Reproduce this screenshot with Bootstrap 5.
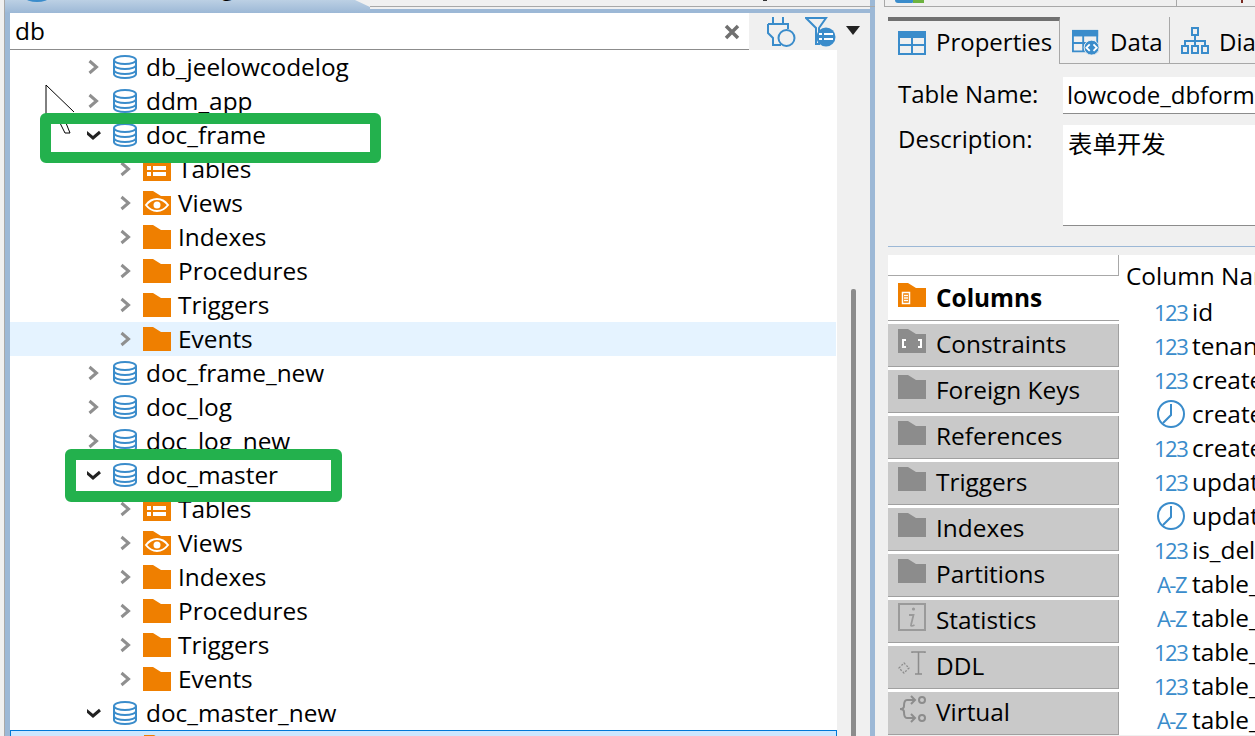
<!DOCTYPE html>
<html lang="en">

<head>
    <meta charset="UTF-8">
    <title>Database Navigator</title>
    <link href="https://cdn.jsdelivr.net/npm/bootstrap@5.3.0/dist/css/bootstrap.min.css" rel="stylesheet">
    <style>
        html, body { height: 100%; }

        body {
            background-color: #f0f0f0;
            color: #000;
            font-family: "Open Sans", "Noto Sans CJK SC", sans-serif;
            font-size: 24.4px;
            overflow: hidden;
        }

        .app { width: 1255px; height: 736px; overflow: hidden; position: relative; }

        /* Left pane */
        .gutter { width: 5px; border-right: 1px solid #a8a8a8; flex: none; }
        .nav-pane { width: 870px; flex: none; border-left: 5px solid #9cb8d6; border-right: 5px solid #9cb8d6; }
        .pane-head { height: 13px; flex: none; margin-left: -5px; margin-right: -5px; overflow: hidden; }
        .pane-tab {
            width: 365px; flex: none; height: 13px; overflow: hidden; padding-left: 20px;
            background: linear-gradient(#bcd0e4, #9cb8d6);
            clip-path: polygon(0 0, 350px 0, 365px 7px, 365px 13px, 0 13px);
        }
        .pane-tab-inner { margin-top: -30px; line-height: 32px; white-space: nowrap; }
        .pane-tab-inner .ico-db { margin-right: 8px; margin-top: 8px; }
        .pane-rest { flex-grow: 1; }
        .pane-rest-top { height: 7px; border-bottom: 1px solid #a8a8a8; padding-left: 393px; }
        .pane-rest-top span { display: block; width: 4px; height: 1px; background: #333; }
        .pane-rest-blue { height: 4px; background: #9cb8d6; margin-top: 2px; }
        .search-bar { flex: none; height: 37px; }
        .search-field {
            width: 739px; height: 37px; flex: none; background: #fff; border-bottom: 1px solid #8c8c8c;
            padding: 1px 5px 0;
        }
        .search-text { flex-grow: 1; }
        .ico-close { width: 16px; height: 16px; margin-right: 4px; }
        .tool-plug { width: 29px; height: 31px; margin-left: 18px; }
        .tool-filter { width: 31px; height: 31px; margin-left: 9px; }
        .tool-caret { width: 14px; height: 9px; margin-left: 10px; margin-top: -3px; }

        .tree-scroll { width: 33px; flex: none; padding: 239px 0 0 14px; }
        .scroll-thumb { width: 5px; height: 460px; background: #8c8c8c; border-radius: 2px 2px 0 0; }
        .tree { width: 827px; flex: none; background: #fff; height: 686px; overflow: hidden; }
        .tree-row { height: 34px; white-space: nowrap; }
        .tree-row.hover { background: #e5f3ff; margin-right: 1px; }
        .tree-row.selected { background: #cce8ff; border: 1px solid #0078d7; }
        .lv0 { padding-left: 77px; }
        .lv1 { padding-left: 109px; }
        .chev { width: 14px; height: 16px; flex: none; margin-right: 12px; }
        .lv1 .chev { margin-right: 10px; }
        .ico-db { width: 24px; height: 24px; flex: none; margin-right: 9px; }
        .ico-folder { width: 28px; height: 24px; flex: none; margin-right: 7px; }

        /* annotations drawn on top of the screenshot */
        .mark-box { position: absolute; border: 11px solid #23b14d; border-radius: 6px; }
        .mark-a { left: 40px; top: 113px; width: 341px; height: 50px; }
        .mark-b { left: 65px; top: 449px; width: 277px; height: 53px; }
        .cursor-trace { position: absolute; left: 44px; top: 83px; width: 32px; height: 54px; }

        /* Right pane */
        .detail { flex-grow: 1; min-width: 0; overflow: hidden; }
        .top-strip { height: 7px; margin-left: 9px; border-left: 1px solid #a8a8a8; border-bottom: 1px solid #a8a8a8; overflow: hidden; }
        .top-strip-a { width: 292px; border-right: 1px solid #a8a8a8; padding-left: 10px; }
        .top-strip-b { padding-left: 64px; }
        .top-strip-b span { display: block; width: 2px; height: 3px; background: #7a2a20; }
        .strip-icon { width: 30px; height: 4px; display: block; }
        .tabs-bar { height: 47px; margin-top: 10px; margin-left: 13px; font-size: 24px; }
        .prop-tab { white-space: nowrap; padding-left: 10px; height: 47px; flex: none; border-bottom: 1px solid #a8a8a8; padding-top: 4px; }
        .prop-tab.active { width: 172px; border-bottom: 0; border-right: 1px solid #a8a8a8; border-top: 4px solid #707070; padding-top: 0; padding-bottom: 2px; }
        .prop-tab.second { width: 110px; border-right: 1px solid #a8a8a8; padding-left: 12px; }
        .prop-tab.third { flex: 1 0 auto; padding-left: 11px; }
        .tab-ico { width: 28px; height: 24px; flex: none; margin-right: 10px; }
        .tab-ico.tall { height: 27px; }
        .prop-tab.active .tab-ico { margin-top: 2px; }
        .prop-tab.third .tab-ico { margin-bottom: 4px; }

        .prop-form { padding-top: 13px; height: 183px; border-bottom: 1px solid #9cb8d6; margin-left: 13px; font-size: 24px; }
        .prop-form-row { padding-left: 10px; }
        .prop-label { width: 165px; flex: none; line-height: 34px; }
        .prop-label.raised { margin-top: -3px; }
        .prop-value.form-control {
            border: 0; border-bottom: 1px solid #8c8c8c; border-radius: 0; background: #fff; color: #000;
            font-size: inherit; padding: 0 4px; white-space: nowrap; overflow: hidden; flex-grow: 1;
        }
        .v-name { height: 37px; line-height: 36px; margin-bottom: 11px; }
        .prop-value.v-desc { height: 101px; padding: 0 5px !important; line-height: 36px; font-size: 24.4px; }
        .cjk-text { font-family: "Noto Sans CJK SC", sans-serif; }

        .lower { margin-left: 13px; margin-top: 8px; background: #fff; height: 480px; }
        .side-tabs { width: 231px; flex: none; }
        .side-blank { height: 21px; border-right: 1px solid #a8a8a8; border-bottom: 1px solid #a8a8a8; margin-bottom: 2px; }
        .side-item { height: 43px; margin-bottom: 3px; padding: 0 0 2px 10px; background: #c9c9c9; border-bottom: 1px solid #a0a0a0; border-right: 1px solid #a0a0a0; white-space: nowrap; }
        .side-item.active { background: #fff; font-weight: 700; border-right: 0; }
        .side-ico { width: 28px; height: 24px; flex: none; margin-right: 10px; margin-bottom: 6px; }
        .side-ico.big { height: 28px; }

        .col-list { flex-grow: 1; min-width: 0; padding-top: 4px; overflow: hidden; }
        .col-head { height: 36px; line-height: 34px; padding-left: 7px; white-space: nowrap; }
        .col-row { height: 34px; padding-left: 35px; white-space: nowrap; }
        .col-type { width: 32px; flex: none; margin-right: 6px; color: #3a8ccb; text-align: right; letter-spacing: -1.5px; font-size: 22px; }
        .col-clock { width: 30px; height: 30px; flex: none; margin: 0 6px 0 2px; }
    </style>
</head>

<body>
    <svg width="0" height="0" class="position-absolute">
        <defs>
            <symbol id="db" viewBox="0 0 24 24">
                <g fill="none" stroke="#3a8ccb" stroke-width="2">
                    <ellipse cx="12" cy="5" rx="11" ry="4" />
                    <path d="M1 5v14c0 2.2 4.9 4 11 4s11-1.8 11-4V5" />
                    <path d="M1 10c0 2.2 4.9 4 11 4s11-1.8 11-4M1 15c0 2.200 4.900 4 11 4s11-1.800 11-4" />
                </g>
            </symbol>
            <symbol id="chev-r" viewBox="0 0 14 16">
                <path d="M2.500 2l7 6-7 6" fill="none" stroke="#8f8f8f" stroke-width="3" />
            </symbol>
            <symbol id="chev-d" viewBox="0 0 14 16">
                <path d="M-1 5l7 6 7-6" fill="none" stroke="#222" stroke-width="3" />
            </symbol>
            <symbol id="folder" viewBox="0 0 28 24">
                <path d="M0 0h10l8 5h10v19H0z" />
            </symbol>
            <symbol id="f-tables" viewBox="0 0 28 24">
                <path d="M0 0h10l8 5h10v19H0z" fill="#ef7f00" />
                <path d="M4 9h4v4H4zM10 9h13v4H10zM4 15h4v4H4zM10 15h13v4H10z" fill="#fff" />
            </symbol>
            <symbol id="f-views" viewBox="0 0 28 24">
                <path d="M0 0h10l8 5h10v19H0z" fill="#ef7f00" />
                <path d="M3 14c6-8 16-8 22 0-6 8-16 8-22 0z" fill="none" stroke="#fff" stroke-width="2" />
                <circle cx="14" cy="14" r="3.500" fill="#fff" />
            </symbol>
            <symbol id="f-columns" viewBox="0 0 28 24">
                <path d="M0 0h10l8 5h10v19H0z" fill="#ef7f00" />
                <path d="M3 7h10v15H3z" fill="#ef7f00" />
                <path d="M4.500 9.500h7v11h-7z" fill="none" stroke="#fff" stroke-width="1.500" />
                <path d="M6 12.500h4M6 15h4M6 17.500h4" stroke="#fff" stroke-width="1.500" />
            </symbol>
            <symbol id="f-constraints" viewBox="0 0 28 24">
                <path d="M0 0h10l8 5h10v19H0z" fill="#8c8c8c" />
                <path d="M8 11H5v7h3M20 11h3v7h-3" fill="none" stroke="#fff" stroke-width="2" />
            </symbol>
            <symbol id="i-stats" viewBox="0 0 28 28">
                <path d="M1 1h26v26H1z" fill="none" stroke="#9a9a9a" stroke-width="2" />
                <circle cx="15.500" cy="6" r="1.600" fill="#9a9a9a" />
                <path d="M11 12h4.500l-2.500 10c-.3 1 .5 1.500 3.500 0" fill="none" stroke="#9a9a9a" stroke-width="1.800" />
            </symbol>
            <symbol id="i-ddl" viewBox="0 0 28 24">
                <path d="M14 2V1h13v1M20.500 1v22M17 23h7" fill="none" stroke="#8c8c8c" stroke-width="1.500" />
                <path d="M1 17l5-5 5 5-5 5z" fill="none" stroke="#8c8c8c" stroke-width="1.300" stroke-dasharray="2 1.500" />
            </symbol>
            <symbol id="i-virtual" viewBox="0 0 28 28">
                <g fill="none" stroke="#8c8c8c" stroke-width="2">
                    <path d="M16 5H9C6 5 6 8 6 11c0 2-1 3-4 3 3 0 4 1 4 3 0 3 0 6 3 6h7" />
                    <path d="M13 1l4 4-4 4M13 19l4 4-4 4" />
                    <circle cx="24" cy="5" r="3" />
                    <circle cx="24" cy="23" r="3" />
                </g>
            </symbol>
            <symbol id="i-clock" viewBox="0 0 30 30">
                <circle cx="15" cy="15" r="13" fill="none" stroke="#3a8ccb" stroke-width="2" />
                <path d="M15 5v11L7 24" fill="none" stroke="#3a8ccb" stroke-width="2" />
            </symbol>
            <symbol id="t-table" viewBox="0 0 28 24">
                <path d="M0 0h28v7H0z" fill="#3a8ccb" />
                <path d="M1 1h26v22H1zM1 14h26M14 6v17" fill="none" stroke="#3a8ccb" stroke-width="2" />
            </symbol>
            <symbol id="t-data" viewBox="0 0 30 27">
                <path d="M0 0h28v7H0z" fill="#3a8ccb" />
                <path d="M1 1h26v22H1zM1 14h14M12 6v17" fill="none" stroke="#3a8ccb" stroke-width="2" />
                <circle cx="21" cy="19" r="8" fill="#3a8ccb" stroke="#f0f0f0" stroke-width="1" />
                <path d="M19 15.500L15.500 19l3.500 3.500M23 15.500l3.500 3.500-3.500 3.500" fill="none" stroke="#fff" stroke-width="2" />
            </symbol>
            <symbol id="t-diagram" viewBox="0 0 28 27">
                <g fill="none" stroke="#3a8ccb" stroke-width="2">
                    <path d="M11 1h6v7h-6zM14 8v6M4 18v-4h20v4M14 14v4" />
                    <path d="M1 19h6v7H1zM11 19h6v7h-6zM21 19h6v7h-6z" />
                </g>
            </symbol>
            <symbol id="t-plug" viewBox="0 0 29 31">
                <g fill="none" stroke="#3a8ccb" stroke-width="2">
                    <path d="M6 1v7M16 1v7M1 8h20v5M1 8v9l5 5v7h8" />
                    <circle cx="19.500" cy="22" r="8" />
                </g>
            </symbol>
            <symbol id="t-filter" viewBox="0 0 31 31">
                <path d="M1 2h20l-7 10v16h-3V12z" fill="none" stroke="#3a8ccb" stroke-width="2" />
                <circle cx="21" cy="21" r="9.500" fill="#3a8ccb" />
                <path d="M14 17h3v2h-3zM19 17h9v2h-9zM14 22h3v2h-3zM19 22h9v2h-9z" fill="#fff" />
            </symbol>
        </defs>
    </svg>

    <div class="app d-flex">
        <div class="gutter"></div>

        <!-- Navigator -->
        <div class="nav-pane d-flex flex-column">
            <div class="pane-head d-flex">
                <div class="pane-tab">
                    <div class="pane-tab-inner d-flex align-items-center">
                        <svg class="ico-db"><use href="#db" /></svg>
                        <span>Database Navigator</span>
                    </div>
                </div>
                <div class="pane-rest">
                    <div class="pane-rest-top"><span></span></div>
                    <div class="pane-rest-blue"></div>
                </div>
            </div>

            <div class="search-bar d-flex align-items-center">
                <div class="search-field d-flex align-items-center">
                    <span class="search-text">db</span>
                    <svg class="ico-close" viewBox="0 0 16 16"><path d="M2 2l12 12M14 2L2 14" stroke="#707070" stroke-width="3.500" /></svg>
                </div>
                <svg class="tool-plug"><use href="#t-plug" /></svg>
                <svg class="tool-filter"><use href="#t-filter" /></svg>
                <svg class="tool-caret" viewBox="0 0 14 9"><path d="M0 0h14L7 9z" fill="#222" /></svg>
            </div>

            <div class="d-flex">
                <ul class="tree list-unstyled mb-0" id="tree"></ul>
                <div class="tree-scroll"><div class="scroll-thumb"></div></div>
            </div>
        </div>

        <!-- Table editor -->
        <div class="detail">
            <div class="top-strip d-flex">
                <div class="top-strip-a">
                    <svg class="strip-icon" viewBox="0 0 30 4"><path d="M0 0h18v2c0 1-1 1-2 1H3C1 3 0 2 0 0z" fill="#3a8ccb" /><path d="M18 0h11v3H18z" fill="#6db33f" /></svg>
                </div>
                <div class="top-strip-b"><span></span></div>
            </div>

            <div class="tabs-bar d-flex">
                <div class="prop-tab active d-flex align-items-center">
                    <svg class="tab-ico"><use href="#t-table" /></svg>Properties
                </div>
                <div class="prop-tab second d-flex align-items-center">
                    <svg class="tab-ico tall"><use href="#t-data" /></svg>Data
                </div>
                <div class="prop-tab third d-flex align-items-center">
                    <svg class="tab-ico tall"><use href="#t-diagram" /></svg>Diagram
                </div>
            </div>

            <div class="prop-form">
                <div class="prop-form-row d-flex">
                    <div class="prop-label">Table Name:</div>
                    <div class="prop-value v-name form-control">lowcode_dbform</div>
                </div>
                <div class="prop-form-row d-flex">
                    <div class="prop-label raised">Description:</div>
                    <div class="prop-value v-desc form-control cjk-text">表单开发</div>
                </div>
            </div>

            <div class="lower d-flex">
                <div class="side-tabs">
                    <div class="side-blank"></div>
                    <div class="nav flex-column flex-nowrap" id="side"></div>
                </div>
                <div class="col-list">
                    <div class="col-head">Column Name</div>
                    <div id="cols"></div>
                </div>
            </div>
        </div>

        <!-- annotations -->
        <svg class="cursor-trace" viewBox="0 0 32 54"><path d="M2 2v32M2 2l28 27M16 40l5 10h5l-4-10" fill="none" stroke="#000" stroke-width="1" /></svg>
        <div class="mark-box mark-a"></div>
        <div class="mark-box mark-b"></div>
    </div>

    <script src="https://cdn.jsdelivr.net/npm/bootstrap@5.3.0/dist/js/bootstrap.bundle.min.js"></script>
    <script>
        const folderSet = [
            ['Tables', 'f-tables'], ['Views', 'f-views'], ['Indexes'],
            ['Procedures'], ['Triggers'], ['Events']
        ];

        function dbRow(name, open) {
            return `<li class="tree-row lv0 d-flex align-items-center">
                <svg class="chev"><use href="#${open ? 'chev-d' : 'chev-r'}" /></svg>
                <svg class="ico-db"><use href="#db" /></svg>${name}</li>`;
        }

        function childRow(item, extra) {
            const icon = item[1]
                ? `<svg class="ico-folder"><use href="#${item[1]}" /></svg>`
                : `<svg class="ico-folder" fill="#ef7f00"><use href="#folder" /></svg>`;
            return `<li class="tree-row lv1 d-flex align-items-center ${extra || ''}">
                <svg class="chev"><use href="#chev-r" /></svg>${icon}${item[0]}</li>`;
        }

        let html = dbRow('db_jeelowcodelog') + dbRow('ddm_app') + dbRow('doc_frame', true);
        folderSet.forEach(f => { html += childRow(f, f[0] === 'Events' ? 'hover' : ''); });
        html += dbRow('doc_frame_new') + dbRow('doc_log') + dbRow('doc_log_new') + dbRow('doc_master', true);
        folderSet.forEach(f => { html += childRow(f); });
        html += dbRow('doc_master_new', true);
        html += `<li class="tree-row selected lv1 d-flex align-items-center"><svg class="chev"></svg><svg class="ico-folder" fill="#ef7f00"><use href="#folder" /></svg>Tables</li>`;
        document.getElementById('tree').innerHTML = html;

        const sideTabs = [
            ['Columns', 'f-columns', 'orange'], ['Constraints', 'f-constraints'], ['Foreign Keys'], ['References'],
            ['Triggers'], ['Indexes'], ['Partitions'], ['Statistics', 'i-stats'], ['DDL', 'i-ddl'], ['Virtual', 'i-virtual']
        ];
        document.getElementById('side').innerHTML = sideTabs.map((t, i) => {
            const big = t[1] === 'i-stats' || t[1] === 'i-virtual' ? ' big' : '';
            const icon = t[1]
                ? `<svg class="side-ico${big}"><use href="#${t[1]}" /></svg>`
                : `<svg class="side-ico" fill="#8c8c8c"><use href="#folder" /></svg>`;
            return `<div class="side-item d-flex align-items-center${i === 0 ? ' active' : ''}">${icon}${t[0]}</div>`;
        }).join('');

        const columns = [
            ['123', 'id'], ['123', 'tenant_id'], ['123', 'create_by'], ['c', 'create_time'], ['123', 'create_dept'],
            ['123', 'update_by'], ['c', 'update_time'], ['123', 'is_deleted'], ['A-Z', 'table_name'], ['A-Z', 'table_type'],
            ['123', 'table_sort'], ['123', 'table_level'], ['A-Z', 'table_code']
        ];
        document.getElementById('cols').innerHTML = columns.map(c => {
            const icon = c[0] === 'c'
                ? '<svg class="col-clock"><use href="#i-clock" /></svg>'
                : `<span class="col-type">${c[0]}</span>`;
            return `<div class="col-row d-flex align-items-center">${icon}${c[1]}</div>`;
        }).join('');
    </script>
</body>

</html>
